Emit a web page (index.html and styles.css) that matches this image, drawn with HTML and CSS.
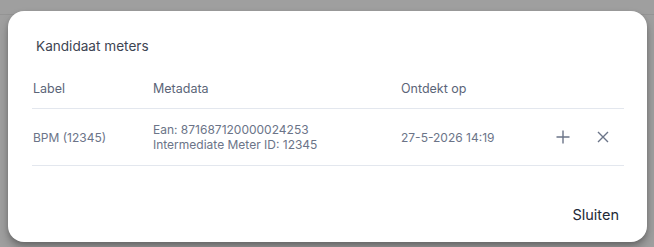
FILE: index.html
```html
<!DOCTYPE html>
<html lang="nl">
<head>
<meta charset="utf-8">
<title>Kandidaat meters</title>
<link rel="stylesheet" href="styles.css">
</head>
<body>
<div class="backdrop">
  <div class="page-line"></div>
  <div class="dialog" role="dialog" aria-labelledby="dlg-title">
    <h2 class="dialog-title" id="dlg-title">Kandidaat meters</h2>
    <div class="table">
      <div class="row head">
        <div class="cell">Label</div>
        <div class="cell">Metadata</div>
        <div class="cell">Ontdekt op</div>
        <div class="cell"></div>
      </div>
      <div class="row body">
        <div class="cell">BPM (12345)</div>
        <div class="cell meta">
          <span>Ean: 871687120000024253</span>
          <span>Intermediate Meter ID: 12345</span>
        </div>
        <div class="cell">27-5-2026 14:19</div>
        <div class="cell actions">
          <button class="icon-btn" aria-label="Toevoegen">
            <svg width="16" height="16" viewBox="0 0 16 16"><path d="M8 1.5v13M1.5 8h13" stroke="currentColor" stroke-width="1.4" fill="none"/></svg>
          </button>
          <button class="icon-btn" aria-label="Verwijderen">
            <svg width="16" height="16" viewBox="0 0 16 16"><path d="M3 3l10 10M13 3L3 13" stroke="currentColor" stroke-width="1.4" fill="none"/></svg>
          </button>
        </div>
      </div>
    </div>
    <div class="footer">
      <button class="text-btn">Sluiten</button>
    </div>
  </div>
</div>
</body>
</html>
```
FILE: styles.css
```css
* { box-sizing: border-box; }
html, body { margin: 0; padding: 0; }
body {
  width: 654px;
  height: 247px;
  overflow: hidden;
  background: #9f9f9f;
  font-family: "Inter", "Noto Sans", sans-serif;
}
.backdrop {
  position: relative;
  height: 247px;
  padding: 11px 8px 0 8px;
}
.page-line {
  position: absolute;
  left: 0;
  right: 0;
  top: 14px;
  height: 1px;
  background: #949494;
}
.dialog {
  position: relative;
  width: 639px;
  height: 231px;
  background: #ffffff;
  border-radius: 16px;
  box-shadow: 0 6px 10px rgba(0,0,0,0.25), 0 2px 4px rgba(0,0,0,0.15);
  padding: 25px 24px 10px 24px;
  display: flex;
  flex-direction: column;
}
.dialog-title {
  margin: 0 0 0 4px;
  font-size: 13.6px;
  line-height: 20px;
  font-weight: 400;
  color: #3d4452;
}
.table {
  margin-top: 13px;
  width: 592px;
}
.row {
  display: grid;
  grid-template-columns: 120px 248px 1fr 96px;
  align-items: center;
  border-bottom: 1px solid #e3e7ee;
}
.row.head { height: 40px; font-size: 12.5px; color: #5b6578; }
.row.body { height: 57px; font-size: 12px; color: #6b7488; }
.cell { padding-left: 1px; }
.meta { display: flex; flex-direction: column; line-height: 15px; }
.actions {
  display: flex;
  justify-content: flex-end;
  gap: 8px;
  padding-right: 5px;
}
.icon-btn {
  width: 32px;
  height: 32px;
  border: 0;
  background: none;
  padding: 0;
  color: #6b7488;
  display: flex;
  align-items: center;
  justify-content: center;
}
.footer {
  margin-top: auto;
  display: flex;
  justify-content: flex-end;
}
.text-btn {
  border: 0;
  background: none;
  height: 36px;
  padding: 0 4px 0 3px;
  font-family: inherit;
  font-size: 14.5px;
  color: #222936;
}
```
